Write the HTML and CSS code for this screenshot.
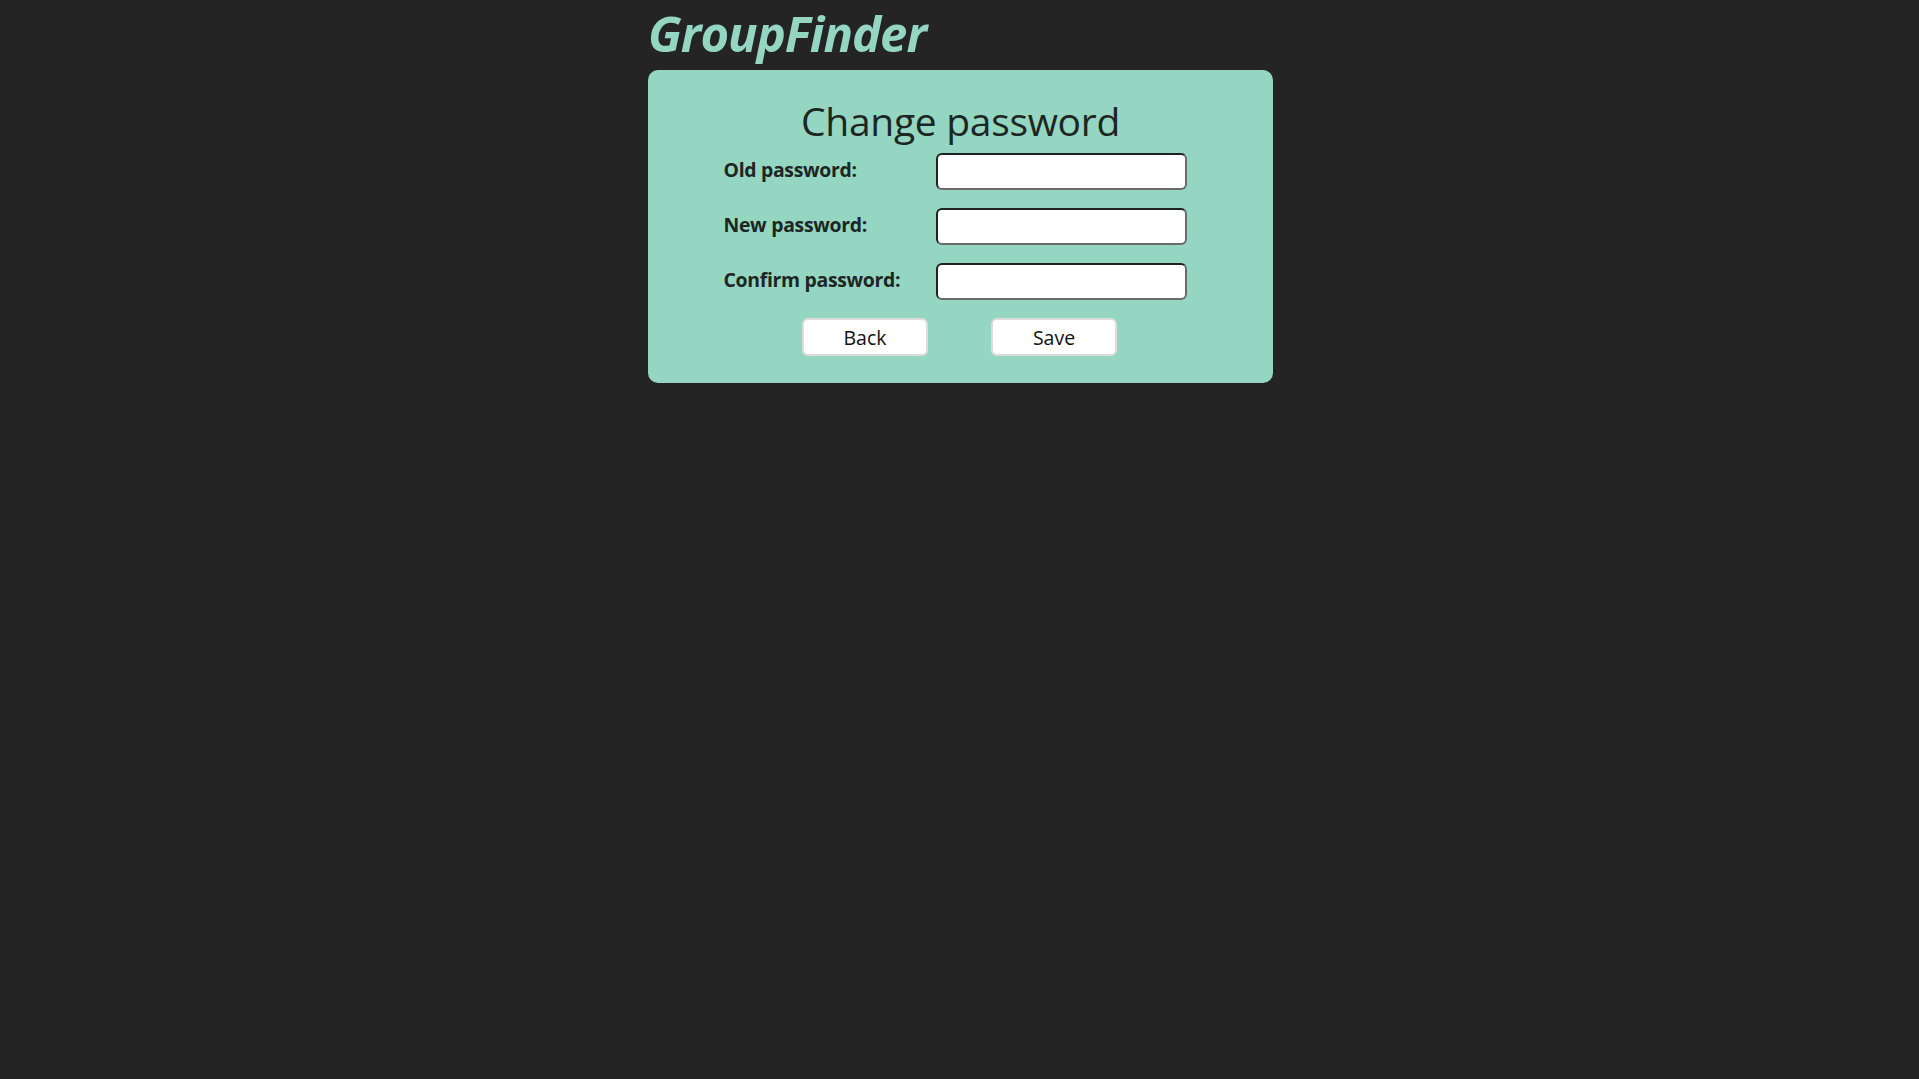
FILE: index.html
```html
<!DOCTYPE html>
<html lang="en">
<head>
<meta charset="utf-8">
<title>GroupFinder - Change password</title>
<link rel="stylesheet" href="styles.css">
</head>
<body>
<div class="page">
  <h1 class="brand">GroupFinder</h1>
  <main class="card">
    <h2 class="card-title">Change password</h2>
    <form class="form">
      <div class="row">
        <label class="label" for="old">Old password:</label>
        <input class="field" id="old" type="password">
      </div>
      <div class="row">
        <label class="label" for="new">New password:</label>
        <input class="field" id="new" type="password">
      </div>
      <div class="row">
        <label class="label" for="confirm">Confirm password:</label>
        <input class="field" id="confirm" type="password">
      </div>
      <div class="actions">
        <button class="btn" type="button">Back</button>
        <button class="btn" type="button">Save</button>
      </div>
    </form>
  </main>
</div>
</body>
</html>
```

FILE: styles.css
```css
html, body {
  margin: 0;
  padding: 0;
  background: #242424;
  min-height: 100%;
}

body {
  font-family: "Open Sans", "Noto Sans", sans-serif;
  color: #1d2623;
  padding-left: 2px;
}

.page {
  width: 625px;
  margin: 0 auto;
  padding-top: 1px;
}

.brand {
  margin: 0;
  height: 69px;
  font-size: 49px;
  line-height: 64px;
  font-style: italic;
  font-weight: 700;
  color: #94d6c2;
  letter-spacing: -1px;
}

.card {
  background: #94d6c2;
  border-radius: 10px;
  height: 313px;
  box-sizing: border-box;
  padding-top: 27px;
}

.card-title {
  margin: 0;
  text-align: center;
  font-weight: 400;
  font-size: 39px;
  line-height: 48px;
  letter-spacing: -0.3px;
}

.form {
  display: flex;
  flex-direction: column;
  align-items: center;
  margin-top: 8px;
  padding-right: 11px;
}

.row {
  display: grid;
  grid-template-columns: 212px 251px;
  align-items: center;
  margin-bottom: 18px;
}

.label {
  font-weight: 700;
  font-size: 19.4px;
  letter-spacing: -0.3px;
  padding-bottom: 4px;
}

.field {
  box-sizing: border-box;
  width: 251px;
  height: 37px;
  margin: 0;
  background: #ffffff;
  border: 2px solid;
  border-color: #1e2320 #6b6b6b #6b6b6b #1e2320;
  border-radius: 6px;
}

.actions {
  display: flex;
  gap: 63px;
  margin-top: 0;
  padding-left: 9px;
}

.btn {
  width: 126px;
  height: 38px;
  box-sizing: border-box;
  background: #ffffff;
  border: 2px solid #dcdcdc;
  border-radius: 6px;
  font-family: "Open Sans", "Noto Sans", sans-serif;
  font-size: 19.5px;
  color: #111;
  padding: 0;
}
```
